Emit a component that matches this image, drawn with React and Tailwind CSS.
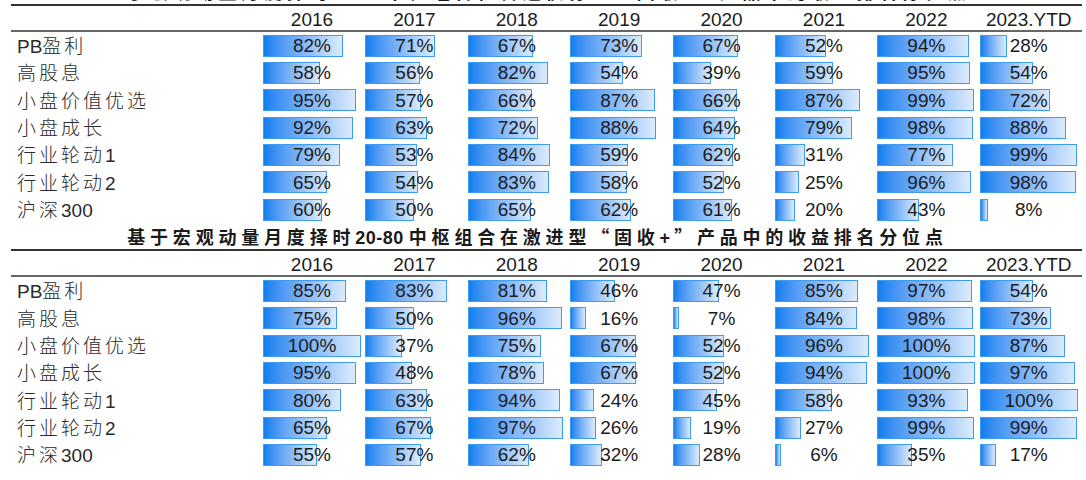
import React from 'react';

const YEARS = ['2016', '2017', '2018', '2019', '2020', '2021', '2022', '2023.YTD'];

const LABELS = ['PB盈利', '高股息', '小盘价值优选', '小盘成长', '行业轮动1', '行业轮动2', '沪深300'];

const TOP = [
    [82, 71, 67, 73, 67, 52, 94, 28],
    [58, 56, 82, 54, 39, 59, 95, 54],
    [95, 57, 66, 87, 66, 87, 99, 72],
    [92, 63, 72, 88, 64, 79, 98, 88],
    [79, 53, 84, 59, 62, 31, 77, 99],
    [65, 54, 83, 58, 52, 25, 96, 98],
    [60, 50, 65, 62, 61, 20, 43, 8],
];

const BOTTOM = [
    [85, 83, 81, 46, 47, 85, 97, 54],
    [75, 50, 96, 16, 7, 84, 98, 73],
    [100, 37, 75, 67, 52, 96, 100, 87],
    [95, 48, 78, 67, 52, 94, 100, 97],
    [80, 63, 94, 24, 45, 58, 93, 100],
    [65, 67, 97, 26, 19, 27, 99, 99],
    [55, 57, 62, 32, 28, 6, 35, 17],
];

// split CJK runs so only they get the wider tracking
const Label = ({ text }) => (
    <span>
        {text.split(/([\u4e00-\u9fff]+)/).filter(Boolean).map((part, i) =>
            /[\u4e00-\u9fff]/.test(part)
                ? <span key={i} className="tracking-[3px] font-['Noto_Sans_CJK_SC',sans-serif] font-light">{part}</span>
                : <span key={i}>{part}</span>
        )}
    </span>
);

const BarCell = ({ value }) => (
    <div className="flex items-center">
        <div className="relative w-[98px] h-[22px] flex items-center justify-center">
            <div
                className="absolute left-0 top-0 h-full border border-[#3d9cf0] bg-gradient-to-r from-[#0a7fef] to-[#dcebfb]"
                style={{ width: `${Math.max(value * 0.98, 3)}px` }}
            />
            <span className="relative text-[19px] text-[#1c1c1c] leading-none">{value}%</span>
        </div>
    </div>
);

const Section = ({ rows }) => (
    <div className="border-t-2 border-[#333]">
        <div className="grid grid-cols-[252px_repeat(8,102.4px)] h-[26px] border-b-2 border-[#666] items-center pt-[2px]">
            <div />
            {YEARS.map(y => (
                <div key={y} className="w-[98px] text-center text-[19px] text-[#1c1c1c] leading-none">{y}</div>
            ))}
        </div>
        {rows.map((row, r) => (
            <div key={r} className="grid grid-cols-[252px_repeat(8,102.4px)] h-[27.33px] items-center">
                <div className="pl-[6px] text-[19px] text-[#2a2a2a] leading-none">
                    <Label text={LABELS[r]} />
                </div>
                {row.map((v, c) => <BarCell key={c} value={v} />)}
            </div>
        ))}
    </div>
);

const Title = ({ middle }) => (
    <div className="text-[18px] font-bold text-[#1a1a1a] leading-none whitespace-nowrap text-center">
        <span className="tracking-[4.8px] font-['Noto_Sans_CJK_SC',sans-serif]">基于宏观动量月度择时</span>
        <span className="tracking-[0.5px] mr-[5px]">20-80</span>
        <span className="tracking-[4.8px] font-['Noto_Sans_CJK_SC',sans-serif]">{middle}“固收</span>
        <span className="mr-[4px]">+</span>
        <span className="tracking-[4.8px] font-['Noto_Sans_CJK_SC',sans-serif]">”产品中的收益排名分位点</span>
    </div>
);

export default function App() {
    return (
        <div className="w-[1086px] h-[480px] bg-white overflow-hidden font-['Liberation_Sans','Noto_Sans_CJK_SC',sans-serif]">
            <div className="ml-[11px] w-[1071px]">
                {/* first title, cut off by the top edge */}
                <div className="h-[4px] overflow-hidden flex items-end justify-center pr-[18px]">
                    <div className="pb-[2px]">
                        <Title middle="中枢组合在普通债券型" />
                    </div>
                </div>
                <Section rows={TOP} />
                <div className="h-[26px] flex items-center justify-center pt-[2px] pr-[18px]">
                    <Title middle="中枢组合在激进型" />
                </div>
                <Section rows={BOTTOM} />
            </div>
        </div>
    );
}
